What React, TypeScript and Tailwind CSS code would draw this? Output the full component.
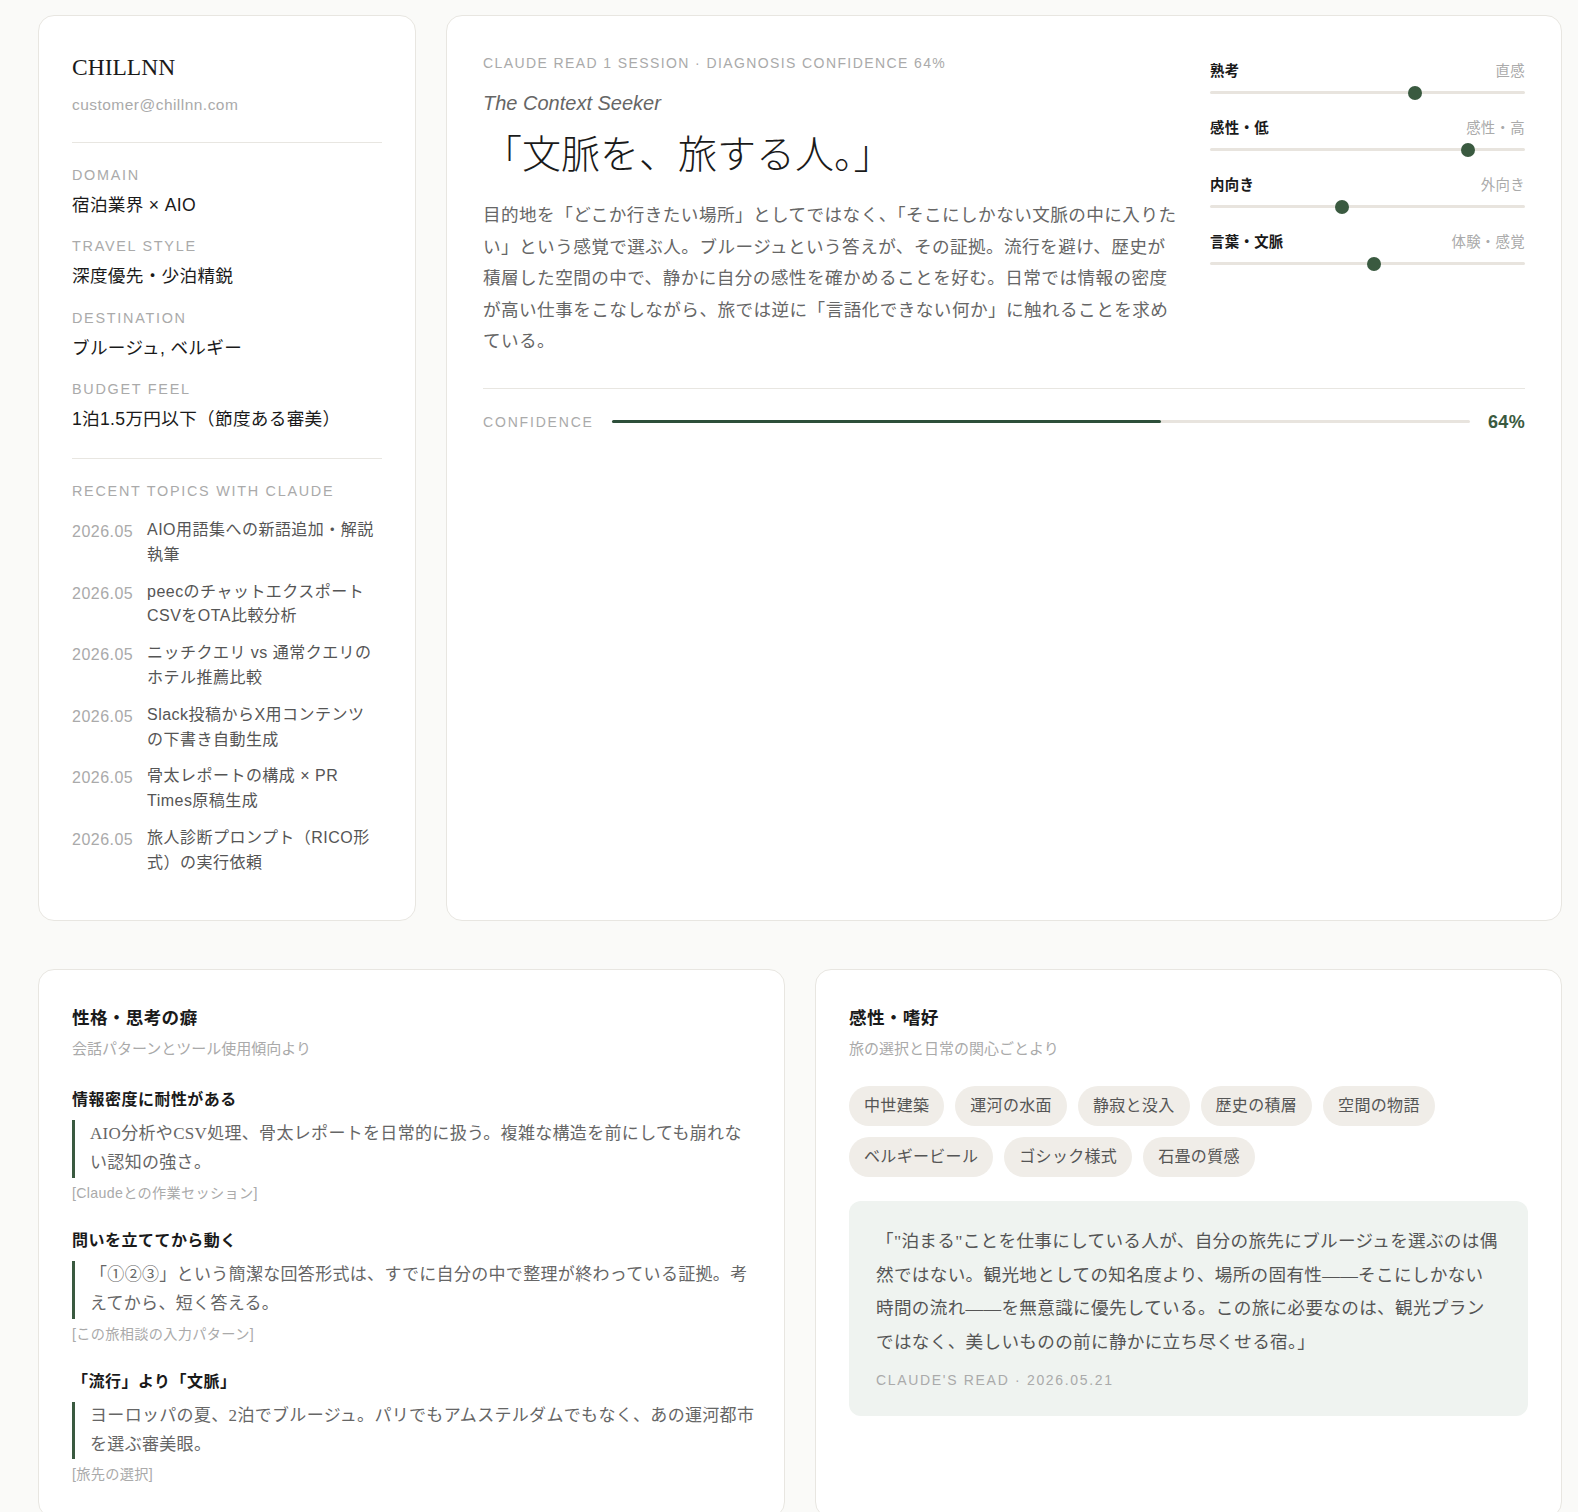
const sans = "font-['Liberation_Sans','Noto_Sans_CJK_JP',sans-serif]";
const serif = "font-['Liberation_Serif','Noto_Sans_CJK_JP',serif]";

const profile = [
  { label: 'DOMAIN', value: '宿泊業界 × AIO' },
  { label: 'TRAVEL STYLE', value: '深度優先・少泊精鋭' },
  { label: 'DESTINATION', value: 'ブルージュ, ベルギー' },
  { label: 'BUDGET FEEL', value: '1泊1.5万円以下（節度ある審美）' },
];

const topics = [
  'AIO用語集への新語追加・解説執筆',
  'peecのチャットエクスポートCSVをOTA比較分析',
  'ニッチクエリ vs 通常クエリのホテル推薦比較',
  'Slack投稿からX用コンテンツの下書き自動生成',
  '骨太レポートの構成 × PR Times原稿生成',
  '旅人診断プロンプト（RICO形式）の実行依頼',
];

const sliders = [
  { left: '熟考', right: '直感', pos: 65 },
  { left: '感性・低', right: '感性・高', pos: 82 },
  { left: '内向き', right: '外向き', pos: 42 },
  { left: '言葉・文脈', right: '体験・感覚', pos: 52 },
];

const traits = [
  {
    title: '情報密度に耐性がある',
    body: 'AIO分析やCSV処理、骨太レポートを日常的に扱う。複雑な構造を前にしても崩れない認知の強さ。',
    source: '[Claudeとの作業セッション]',
  },
  {
    title: '問いを立ててから動く',
    body: '「①②③」という簡潔な回答形式は、すでに自分の中で整理が終わっている証拠。考えてから、短く答える。',
    source: '[この旅相談の入力パターン]',
  },
  {
    title: '「流行」より「文脈」',
    body: 'ヨーロッパの夏、2泊でブルージュ。パリでもアムステルダムでもなく、あの運河都市を選ぶ審美眼。',
    source: '[旅先の選択]',
  },
];

const tags = ['中世建築', '運河の水面', '静寂と没入', '歴史の積層', '空間の物語', 'ベルギービール', 'ゴシック様式', '石畳の質感'];

const App = () => {
  return (
    <div className={`h-[1512px] overflow-hidden bg-[#fafaf8] pt-[15px] pl-[38px] pr-[16px] tracking-[0.02em] text-[#1a1a1a] ${sans}`}>
      <div className="grid h-[906px] grid-cols-[378px_1fr] gap-[30px]">
        <aside className="rounded-[16px] border border-[#e8e6e1] bg-white px-[33px] pt-[33px]">
          <div className={`text-[23.5px] leading-[36px] tracking-normal ${serif}`}>CHILLNN</div>
          <div className="mt-[10px] text-[15.5px] leading-[20px] tracking-[0.03em] text-[#aaaaaa]">customer@chillnn.com</div>
          <div className="mt-[26.5px] border-t border-[#e8e6e1]" />
          <div className="mt-[22px] flex flex-col gap-[17.5px]">
            {profile.map((p) => (
              <div key={p.label}>
                <div className="text-[14.4px] leading-[20px] tracking-[0.12em] text-[#aaaaaa]">{p.label}</div>
                <div className="mt-[6px] text-[17.6px] leading-[28px] text-[#1a1a1a]">{p.value}</div>
              </div>
            ))}
          </div>
          <div className="mt-[25px] border-t border-[#e8e6e1]" />
          <div className="mt-[22px] text-[14.4px] leading-[20px] tracking-[0.12em] text-[#aaaaaa]">RECENT TOPICS WITH CLAUDE</div>
          <div className="mt-[17px] flex flex-col gap-[12px] pr-[4px]">
            {topics.map((t) => (
              <div key={t} className="flex gap-[13px]">
                <span className="w-[62px] shrink-0 pt-[2px] text-[16px] leading-[24.8px] tracking-[0.03em] text-[#aaaaaa]">2026.05</span>
                <span className="text-[16px] leading-[24.8px] tracking-[0.03em] text-[#555555]">{t}</span>
              </div>
            ))}
          </div>
        </aside>

        <main className="rounded-[16px] border border-[#e8e6e1] bg-white px-[36px] pt-[37px]">
          <div className="flex gap-[32px]">
            <div className="min-w-0 flex-1">
              <div className="text-[14px] leading-[20px] tracking-[0.1em] text-[#aaaaaa]">CLAUDE READ 1 SESSION · DIAGNOSIS CONFIDENCE 64%</div>
              <div className="mt-[16px] text-[20px] leading-[28px] tracking-normal text-[#666666] italic">The Context Seeker</div>
              <h1 className={`mt-[10px] text-[39px] leading-[56px] font-light tracking-normal ${serif}`}>「文脈を、旅する人。」</h1>
              <p className="mt-[17px] text-[17.6px] leading-[31.5px] tracking-[0.025em] text-[#666666]">
                目的地を「どこか行きたい場所」としてではなく、「そこにしかない文脈の中に入りたい」という感覚で選ぶ人。ブルージュという答えが、その証拠。流行を避け、歴史が積層した空間の中で、静かに自分の感性を確かめることを好む。日常では情報の密度が高い仕事をこなしながら、旅では逆に「言語化できない何か」に触れることを求めている。
              </p>
            </div>
            <div className="flex w-[315px] shrink-0 flex-col gap-[23px] pt-[7px]">
              {sliders.map((s) => (
                <div key={s.left}>
                  <div className="flex justify-between text-[14.4px] leading-[22px]">
                    <span className="font-semibold text-[#1a1a1a]">{s.left}</span>
                    <span className="text-[#aaaaaa]">{s.right}</span>
                  </div>
                  <div className="relative mt-[9px] h-[3px] rounded-full bg-[#e8e4de]">
                    <div
                      className="absolute top-1/2 h-[14px] w-[14px] -translate-x-1/2 -translate-y-1/2 rounded-full bg-[#3a5a40]"
                      style={{ left: `${s.pos}%` }}
                    />
                  </div>
                </div>
              ))}
            </div>
          </div>
          <div className="mt-[30px] flex items-center gap-[18px] border-t border-[#e8e6e1] pt-[21px]">
            <span className="text-[14px] leading-[20px] tracking-[0.13em] text-[#aaaaaa]">CONFIDENCE</span>
            <div className="h-[3px] flex-1 rounded-full bg-[#e8e4de]">
              <div className="h-full w-[64%] rounded-full bg-[#2d4f3a]" />
            </div>
            <span className="text-[18px] leading-[24px] font-semibold text-[#3a5a40]">64%</span>
          </div>
        </main>
      </div>

      <div className="mt-[48px] grid grid-cols-2 gap-[30px]">
        <section className="rounded-[16px] border border-[#e8e6e1] bg-white px-[33px] pt-[34px] pb-[33px]">
          <h2 className="text-[17.6px] leading-[28px] font-semibold">性格・思考の癖</h2>
          <div className="mt-[6px] text-[15px] leading-[22px] tracking-normal text-[#aaaaaa]">会話パターンとツール使用傾向より</div>
          <div className="mt-[28px] flex flex-col gap-[26px]">
            {traits.map((t) => (
              <div key={t.title}>
                <h3 className="text-[16px] leading-[24px] font-semibold tracking-[0.03em]">{t.title}</h3>
                <p className={`mt-[8px] -mr-[4px] border-l-[3px] border-[#3a5a40] pl-[15px] text-[17px] leading-[28.9px] text-[#666666] ${serif}`}>{t.body}</p>
                <div className="mt-[5px] text-[14.2px] leading-[20px] text-[#aaaaaa]">{t.source}</div>
              </div>
            ))}
          </div>
        </section>

        <section className="rounded-[16px] border border-[#e8e6e1] bg-white px-[33px] pt-[34px]">
          <h2 className="text-[17.6px] leading-[28px] font-semibold">感性・嗜好</h2>
          <div className="mt-[6px] text-[15px] leading-[22px] tracking-normal text-[#aaaaaa]">旅の選択と日常の関心ごとより</div>
          <div className="mt-[26px] flex flex-wrap gap-[11px]">
            {tags.map((t) => (
              <span key={t} className="rounded-full bg-[#f0ede8] px-[15px] py-[8px] text-[16px] leading-[24px] text-[#555555]">{t}</span>
            ))}
          </div>
          <div className="mt-[24px] rounded-[12px] bg-[#eff3f0] px-[27px] pt-[24px] pb-[26px]">
            <p className={`text-[17.6px] leading-[33.6px] text-[#555555] ${serif}`}>
              「"泊まる"ことを仕事にしている人が、自分の旅先にブルージュを選ぶのは偶然ではない。観光地としての知名度より、場所の固有性——そこにしかない時間の流れ——を無意識に優先している。この旅に必要なのは、観光プランではなく、美しいものの前に静かに立ち尽くせる宿。」
            </p>
            <div className="mt-[11px] text-[14px] leading-[20px] tracking-[0.12em] text-[#aaaaaa]">CLAUDE'S READ · 2026.05.21</div>
          </div>
        </section>
      </div>
    </div>
  );
};

export default App;
